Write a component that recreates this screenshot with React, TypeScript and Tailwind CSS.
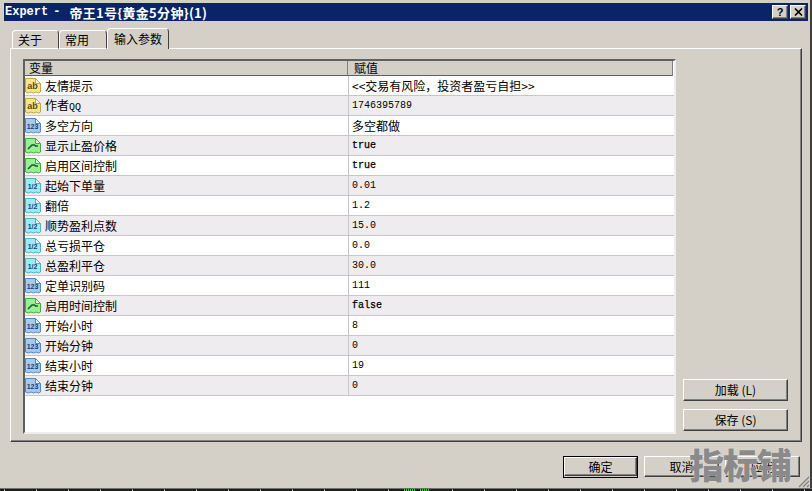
import React from "react";

const MONO = "font-['Liberation_Mono',monospace]";

type Kind = "ab" | "num" | "bool" | "dbl";

const rows: { name: string; suffix?: string; value: string; kind: Kind; bold?: boolean; cjk?: boolean }[] = [
  { name: "友情提示", value: "<<交易有风险，投资者盈亏自担>>", kind: "ab", cjk: true },
  { name: "作者", suffix: "QQ", value: "1746395789", kind: "ab" },
  { name: "多空方向", value: "多空都做", kind: "num", cjk: true },
  { name: "显示止盈价格", value: "true", kind: "bool", bold: true },
  { name: "启用区间控制", value: "true", kind: "bool", bold: true },
  { name: "起始下单量", value: "0.01", kind: "dbl" },
  { name: "翻倍", value: "1.2", kind: "dbl" },
  { name: "顺势盈利点数", value: "15.0", kind: "dbl" },
  { name: "总亏损平仓", value: "0.0", kind: "dbl" },
  { name: "总盈利平仓", value: "30.0", kind: "dbl" },
  { name: "定单识别码", value: "111", kind: "num" },
  { name: "启用时间控制", value: "false", kind: "bool", bold: true },
  { name: "开始小时", value: "8", kind: "num" },
  { name: "开始分钟", value: "0", kind: "num" },
  { name: "结束小时", value: "19", kind: "num" },
  { name: "结束分钟", value: "0", kind: "num" },
];

const iconColors: Record<Kind, { fill: string; stroke: string; fold: string }> = {
  ab: { fill: "#f6e48e", stroke: "#c2a544", fold: "#fffbe0" },
  num: { fill: "#a4caf2", stroke: "#5788c2", fold: "#eaf4ff" },
  bool: { fill: "#9cee96", stroke: "#45ad45", fold: "#e6ffe2" },
  dbl: { fill: "#a2e8f2", stroke: "#4fb2c8", fold: "#e6fcff" },
};

const TypeIcon = ({ kind }: { kind: Kind }) => {
  const c = iconColors[kind];
  return (
    <svg width="17" height="17" viewBox="0 0 17 17" className="shrink-0">
      <path
        d="M0.5 1.5H10.5L15.5 6.5V15L13.5 16L11 15L8.5 16L6 15L3.5 16L0.5 15Z"
        fill={c.fill}
        stroke={c.stroke}
      />
      <path d="M10.5 1.5V6.5H15.5Z" fill={c.fold} stroke={c.stroke} />
      {kind === "bool" ? (
        <path d="M3 12L7 8H9.5L10.5 9H13" fill="none" stroke="#0f5f26" strokeWidth="1.5" />
      ) : (
        <text
          x="7.5"
          y="12"
          textAnchor="middle"
          fontFamily="Liberation Sans, sans-serif"
          fontWeight="700"
          fontSize={kind === "ab" ? 9 : 7}
          fill={kind === "ab" ? "#5a4a08" : "#0f3f78"}
        >
          {kind === "ab" ? "ab" : kind === "num" ? "123" : "1/2"}
        </text>
      )}
    </svg>
  );
};

const Button = ({ label, className = "" }: { label: string; className?: string }) => (
  <div
    className={`flex items-center justify-center bg-[#d4d0c8] border border-t-white border-l-white border-r-[#404040] border-b-[#404040] shadow-[inset_-1px_-1px_0_#808080] text-xs text-black ${className}`}
  >
    {label}
  </div>
);

const CaptionButton = ({ children }: { children: React.ReactNode }) => (
  <div className="w-4 h-[14px] flex items-center justify-center bg-[#d4d0c8] border border-t-white border-l-white border-r-[#404040] border-b-[#404040] shadow-[inset_-1px_-1px_0_#808080]">
    {children}
  </div>
);

export default function App() {
  return (
    <div className="relative w-[812px] h-[491px] overflow-hidden bg-[#d4d0c8] font-['Noto_Sans_CJK_SC',sans-serif] text-xs leading-none text-black">
      <div className="h-[488px] flex flex-col pt-[3px] pl-1 pr-[2px] border-r-2 border-r-[#404040]">
        {/* title bar */}
        <div className="h-[18px] shrink-0 bg-[#0a246a] flex items-center justify-between pl-[1px] pr-[2px] text-white font-bold">
          <div className="flex items-center whitespace-nowrap">
            <span className={`${MONO} text-[12px]`}>Expert</span>
            <span className={`${MONO} text-[12px] ml-[5px]`}>-</span>
            <span className="text-[13px] ml-[9px] tracking-[0.3px]">帝王1号{"{"}黄金5分钟{"}"}(1)</span>
          </div>
          <div className="flex gap-[2px]">
            <CaptionButton>
              <span className="text-[11px] font-bold text-black font-['Liberation_Sans',sans-serif]">?</span>
            </CaptionButton>
            <CaptionButton>
              <svg width="9" height="8" viewBox="0 0 9 8">
                <path d="M1 0.5L8 7.5M8 0.5L1 7.5" stroke="#000" strokeWidth="1.6" />
              </svg>
            </CaptionButton>
          </div>
        </div>

        {/* tabs */}
        <div className="h-[27px] shrink-0 flex items-end pl-[8px] relative z-10">
          <div className="w-[47px] h-[19px] mb-[-1px] bg-[#d4d0c8] border border-t-white border-l-white border-r-[#404040] border-b-white rounded-t-sm flex items-center pl-[5px] text-[12px]">
            关于
          </div>
          <div className="w-[48px] h-[19px] mb-[-1px] bg-[#d4d0c8] border border-t-white border-l-white border-r-[#404040] border-b-white rounded-t-sm flex items-center pl-[5px] text-[12px]">
            常用
          </div>
          <div className="w-[62px] h-[21px] mb-[-1px] bg-[#d4d0c8] border border-b-0 border-t-white border-l-white border-r-[#404040] rounded-t-sm flex items-center pl-[6px] text-[12px]">
            输入参数
          </div>
        </div>

        {/* tab panel */}
        <div className="ml-[6px] mr-[6px] h-[394px] shrink-0 flex gap-[7px] border border-t-white border-l-white border-r-[#404040] border-b-[#404040] pt-[10px] pl-[12px] pr-[10px] pb-[7px] shadow-[inset_-1px_-1px_0_#808080]">
          <div className="w-[653px] h-[375px] shrink-0 bg-white flex flex-col border-2 border-t-[#606060] border-l-[#606060] border-r-[#f0eeea] border-b-[#f0eeea]">
            <div className="h-[15px] shrink-0 flex bg-[#d4d0c8] mr-[1px] border-b border-b-[#606060] border-r border-r-[#808080] text-[12px] leading-[14px]">
              <div className="w-[323px] border-r border-r-[#808080] pl-[4px]">变量</div>
              <div className="pl-[6px]">赋值</div>
            </div>
            {rows.map((row, i) => (
              <div
                key={row.name}
                className={`h-5 shrink-0 flex border-b border-b-[#c8c6cc] ${i % 2 ? "bg-[#efecf0]" : "bg-white"}`}
              >
                <div className="w-[324px] shrink-0 flex items-center gap-[3px] border-r border-r-[#c8c6cc] text-[12px] whitespace-nowrap">
                  <TypeIcon kind={row.kind} />
                  <span>
                    {row.name}
                    {row.suffix && <span className={`${MONO} text-[10px]`}>{row.suffix}</span>}
                  </span>
                </div>
                <div
                  className={`pl-[3px] flex items-center whitespace-nowrap ${
                    row.cjk
                      ? "text-[12px]"
                      : `${MONO} text-[10px] ${row.bold ? "[-webkit-text-stroke:0.25px_#000]" : ""}`
                  }`}
                >
                  {row.value}
                </div>
              </div>
            ))}
          </div>
          <div className="w-[105px] flex flex-col justify-end gap-2 pb-[3px]">
            <Button label="加载 (L)" className="h-[22px]" />
            <Button label="保存 (S)" className="h-[22px]" />
          </div>
        </div>

        {/* footer buttons */}
        <div className="flex justify-end gap-[6px] mt-[15px] pr-[8px]">
          <div className="outline outline-1 outline-black mr-[1px]">
            <Button label="确定" className="w-[73px] h-[19px]" />
          </div>
          <Button label="取消" className="w-[75px] h-[21px] mt-[-1px]" />
          <Button label="应用" className="w-[75px] h-[21px] mt-[-1px]" />
        </div>
      </div>

      {/* resize grip */}
      <svg width="12" height="12" viewBox="0 0 12 12" className="absolute right-[2px] bottom-[3px]">
        <path d="M11 1L1 11M11 5L5 11M11 9L9 11" stroke="#808080" strokeWidth="1.2" />
      </svg>

      {/* desktop strip behind the dialog */}
      <div className="absolute left-0 right-0 bottom-0 h-[3px] border-t border-t-[#707070] bg-[repeating-linear-gradient(90deg,#1c1c1c_0,#1c1c1c_4px,#9aa3b5_4px,#9aa3b5_5px,#1c1c1c_5px,#1c1c1c_32px)]" />
      <div className="absolute left-[404px] bottom-0 h-[2px] w-[11px] bg-[repeating-linear-gradient(90deg,#20e020_0,#20e020_1px,#101010_1px,#101010_2px)]" />
      <div className="absolute left-[420px] bottom-0 h-[2px] w-[9px] bg-[repeating-linear-gradient(90deg,#20e020_0,#20e020_1px,#101010_1px,#101010_2px)]" />

      {/* watermark */}
      <div className="absolute left-[689px] top-[445px] text-[35px] leading-[38px] font-black text-[#8a8a8a] tracking-[-1px] whitespace-nowrap [text-shadow:0_0_1px_#fff]">
        指标铺
      </div>
    </div>
  );
}
